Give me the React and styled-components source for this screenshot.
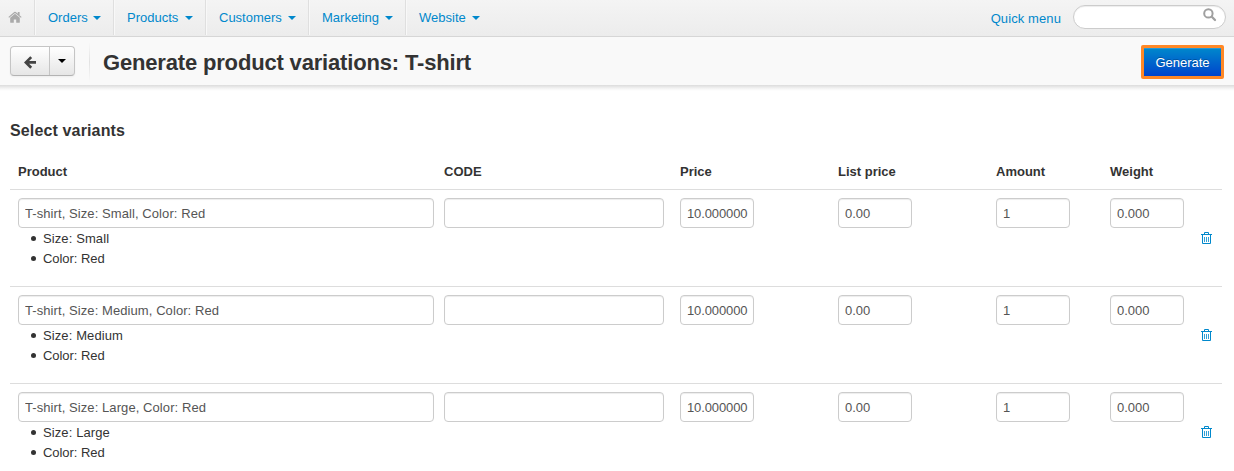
import React from "react";
import styled, { createGlobalStyle } from "styled-components";

const GlobalStyle = createGlobalStyle`
  * { box-sizing: border-box; }
  body {
    margin: 0;
    background: #fff;
    color: #333;
    font: 13px/20px "Liberation Sans", Arial, sans-serif;
    overflow: hidden;
  }
`;

const Page = styled.div`
  height: 471px;
  overflow: hidden;
`;

const TopBar = styled.nav`
  display: flex;
  height: 37px;
  background: linear-gradient(#f4f4f4, #ececec);
  border-bottom: 1px solid #d6d6d6;
`;

const HomeLink = styled.a`
  display: flex;
  width: 35px;
  height: 35px;
  padding: 11px 0 0 8px;
  border-right: 1px solid #dfdfdf;
`;

const MenuItem = styled.a`
  display: flex;
  justify-content: space-between;
  width: ${(p) => p.$width}px;
  height: 35px;
  padding: 8px 12px 0 12px;
  color: #08c;
  white-space: nowrap;
  border-left: 1px solid #f8f8f8;
  border-right: 1px solid ${(p) => (p.$last ? "transparent" : "#dfdfdf")};
`;

const Caret = styled.span`
  width: 0;
  height: 0;
  margin-top: ${(p) => p.$top || 0}px;
  border: 4px solid transparent;
  border-top-color: ${(p) => p.$color || "#08c"};
  border-bottom: 0;
`;

const QuickMenu = styled.a`
  margin: 9px 12px 0 auto;
  color: #08c;
  letter-spacing: 0.1px;
`;

const SearchBox = styled.div`
  display: flex;
  justify-content: flex-end;
  width: 153px;
  height: 24px;
  margin: 5px 8px 0 0;
  padding: 2px 8px 0 0;
  background: #fff;
  border: 1px solid #ccc;
  border-radius: 12px;
  box-shadow: inset 0 1px 1px rgba(0, 0, 0, 0.075);
`;

const TitleBar = styled.header`
  display: flex;
  height: 48px;
  padding: 9px 10px 0;
  background: #f9f9f9;
`;

const BarShadow = styled.div`
  height: 6px;
  background: linear-gradient(#dcdcdc, #eaeaea 35%, #f8f8f8 70%, #fff);
`;

const ButtonGroup = styled.div`
  display: flex;
  width: 65px;
  height: 30px;
  background: linear-gradient(#fff, #e6e6e6);
  border: 1px solid #c5c5c5;
  border-bottom-color: #b3b3b3;
  border-radius: 4px;
  box-shadow: 0 1px 2px rgba(0, 0, 0, 0.05);
`;

const GroupButton = styled.div`
  display: flex;
  justify-content: center;
  width: ${(p) => p.$width}px;
  padding-top: ${(p) => p.$top}px;
  border-right: ${(p) => (p.$divided ? "1px solid #c5c5c5" : "0")};
`;

const Divider = styled.div`
  width: 1px;
  height: 40px;
  margin: -4px 13px 0 14px;
  background: linear-gradient(#f9f9f9, #e2e2e2 50%, #f9f9f9);
`;

const Title = styled.h1`
  margin: 0;
  font-size: 22px;
  line-height: 34px;
  font-weight: bold;
  letter-spacing: -0.17px;
  white-space: nowrap;
`;

const Highlight = styled.div`
  width: 83px;
  height: 34px;
  margin: -1px 0 0 auto;
  padding: 3px;
  background: #ff8826;
  border-radius: 2px;
`;

const PrimaryButton = styled.div`
  height: 28px;
  color: #fff;
  line-height: 29px;
  text-align: center;
  background: linear-gradient(#08c, #04c);
  box-shadow: inset 0 1px 0 rgba(255, 255, 255, 0.15);
  text-shadow: 0 -1px 0 rgba(0, 0, 0, 0.25);
`;

const Content = styled.main`
  padding: 30px 12px 0 10px;
`;

const SectionTitle = styled.h4`
  margin: 0 0 12px;
  font-size: 16px;
  line-height: 20px;
  letter-spacing: 0.14px;
`;

const Row = styled.div`
  display: grid;
  grid-template-columns: 426px 236px 158px 158px 114px 90px 30px;
`;

const HeadRow = styled(Row)`
  height: 36px;
  padding-top: 9px;
  font-weight: bold;
`;

const HeadCell = styled.div`
  padding-left: 8px;
`;

const BodyRow = styled(Row)`
  height: 97px;
  border-top: 1px solid #ddd;
`;

const Cell = styled.div`
  padding: 8px 0 0 8px;
`;

const ActionCell = styled.div`
  display: flex;
  align-items: center;
  padding-left: 9px;
`;

const Field = styled.input`
  display: block;
  width: ${(p) => p.$width}px;
  height: 30px;
  margin: 0;
  padding: 4px 4px 4px 6px;
  color: #555;
  font: inherit;
  letter-spacing: ${(p) => p.$spacing || 0}px;
  background: #fff;
  border: 1px solid #ccc;
  border-radius: 4px;
  outline: 0;
  box-shadow: inset 0 1px 1px rgba(0, 0, 0, 0.075);
`;

const Options = styled.ul`
  margin: 0;
  padding: 1px 0 0 13px;
  list-style: none;
`;

const Option = styled.li`
  display: flex;
  align-items: center;
  gap: 7px;
  line-height: 20px;
  letter-spacing: ${(p) => p.$spacing || 0}px;

  &::before {
    content: "";
    width: 5px;
    height: 5px;
    margin-bottom: 1px;
    border-radius: 50%;
    background: #333;
  }
`;

const menus = [
  { label: "Orders", width: 79 },
  { label: "Products", width: 92 },
  { label: "Customers", width: 103 },
  { label: "Marketing", width: 97 },
  { label: "Website", width: 87 },
];

const columns = ["Product", "CODE", "Price", "List price", "Amount", "Weight"];
const sizes = ["Small", "Medium", "Large"];

const HomeIcon = () => (
  <svg width="14" height="12" viewBox="0 0 14 12" fill="#aaa">
    <path d="M7 2.8 2.2 6.8v4.4c0 .4.2.6.6.6h3V8.5h2.4v3.3h3c.4 0 .6-.2.6-.6V6.8z" />
    <path d="M13.6 6 11.6 4.3V1H9.8v1.8L7.8 1.1a1.2 1.2 0 0 0-1.6 0L.4 6l.7.8L7 2l5.9 4.8z" />
  </svg>
);

const SearchIcon = () => (
  <svg width="14" height="14" viewBox="0 0 14 14" fill="none" stroke="#a0a0a0">
    <circle cx="5.4" cy="5.4" r="4.2" strokeWidth="2" />
    <path d="m8.8 8.8 3.2 3.2" strokeWidth="2.3" strokeLinecap="round" />
  </svg>
);

const BackIcon = () => (
  <svg width="12" height="13" viewBox="0 0 12 13" fill="none" stroke="#444" strokeWidth="2.7">
    <path d="M7.2 1.1 1.9 6.4l5.3 5.3M2 6.4h10" />
  </svg>
);

const TrashIcon = () => (
  <svg width="11" height="12" viewBox="0 0 11 12" fill="none" stroke="#08c">
    <path d="M0 2.5h11M3.5 2V.5h4V2M1.5 3v8.5h8V3" />
    <path d="M3.5 5v5M5.5 5v5M7.5 5v5" opacity="0.8" />
  </svg>
);

export default function App() {
  return (
    <Page>
      <GlobalStyle />
      <TopBar>
        <HomeLink><HomeIcon /></HomeLink>
        {menus.map((m, i) => (
          <MenuItem key={m.label} $width={m.width} $last={i === menus.length - 1}>
            {m.label}
            <Caret $top={8} />
          </MenuItem>
        ))}
        <QuickMenu>Quick menu</QuickMenu>
        <SearchBox><SearchIcon /></SearchBox>
      </TopBar>
      <TitleBar>
        <ButtonGroup>
          <GroupButton $width={39} $top={9} $divided><BackIcon /></GroupButton>
          <GroupButton $width={24} $top={12}><Caret $color="#000" /></GroupButton>
        </ButtonGroup>
        <Divider />
        <Title>Generate product variations: T-shirt</Title>
        <Highlight><PrimaryButton>Generate</PrimaryButton></Highlight>
      </TitleBar>
      <BarShadow />
      <Content>
        <SectionTitle>Select variants</SectionTitle>
        <HeadRow>
          {columns.map((c) => <HeadCell key={c}>{c}</HeadCell>)}
        </HeadRow>
        {sizes.map((size) => (
          <BodyRow key={size}>
            <Cell>
              <Field $width={416} $spacing={0.08} defaultValue={`T-shirt, Size: ${size}, Color: Red`} />
              <Options>
                <Option $spacing={0.1}>Size: {size}</Option>
                <Option $spacing={-0.05}>Color: Red</Option>
              </Options>
            </Cell>
            <Cell><Field $width={220} /></Cell>
            <Cell><Field $width={74} $spacing={-0.12} defaultValue="10.000000" /></Cell>
            <Cell><Field $width={74} defaultValue="0.00" /></Cell>
            <Cell><Field $width={74} defaultValue="1" /></Cell>
            <Cell><Field $width={74} defaultValue="0.000" /></Cell>
            <ActionCell><TrashIcon /></ActionCell>
          </BodyRow>
        ))}
      </Content>
    </Page>
  );
}
